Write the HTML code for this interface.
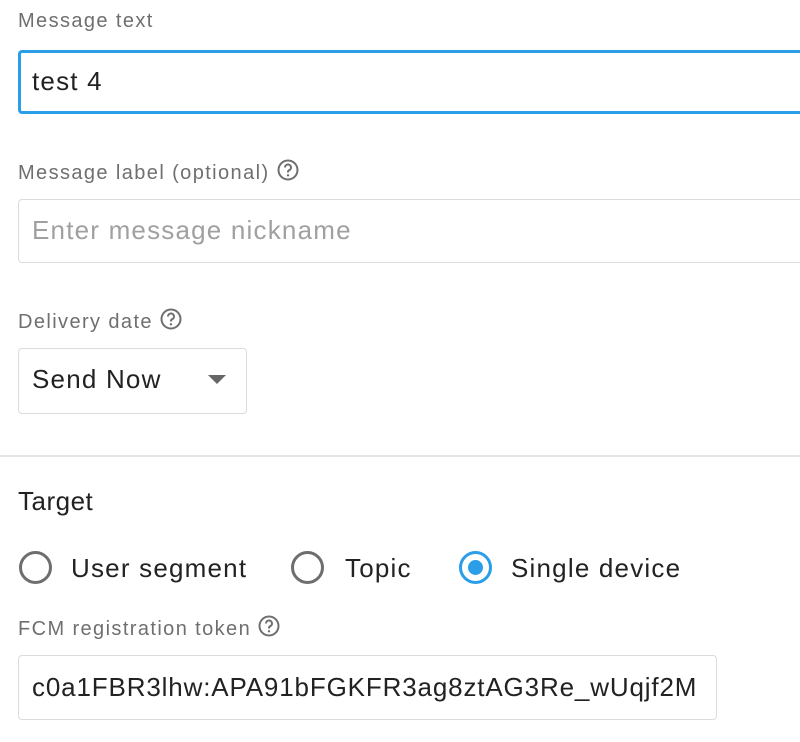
<!DOCTYPE html>
<html><head><meta charset="utf-8"><style>
body{margin:0;width:800px;height:742px;background:#fff;font-family:"Liberation Sans",Arial,sans-serif;position:relative;overflow:hidden}
.a{position:absolute}
.lbl{font-size:20px;color:#6f6f6f;line-height:24px;letter-spacing:1.4px;white-space:nowrap}
.box{position:absolute;box-sizing:border-box;border:1px solid #dcdcdc;border-radius:4px}
.t{position:absolute;font-size:26px;color:#222;line-height:30px;letter-spacing:1.2px;white-space:nowrap}
.q{display:inline-block;vertical-align:-3px;margin-left:6px}
.r{position:absolute;width:33px;height:33px;box-sizing:border-box;border:3px solid #6e6e6e;border-radius:50%}
</style></head><body>
<svg width="0" height="0" style="position:absolute"><symbol id="q" viewBox="0 0 24 24"><circle cx="12" cy="12" r="9.5" fill="none" stroke="#6f6f6f" stroke-width="2"/><path d="M9 9.5a3 3 0 1 1 4.2 2.7c-.8.4-1.2 1-1.2 1.8v.5" fill="none" stroke="#6f6f6f" stroke-width="2"/><circle cx="12" cy="17.3" r="1.2" fill="#6f6f6f"/></symbol></svg>
<div class="a lbl" style="left:18px;top:9px">Message text</div>
<div class="box" style="left:18px;top:50px;width:800px;height:64px;border:3px solid #2a9ee8"></div>
<div class="t" style="left:32px;top:66px">test 4</div>

<div class="a lbl" style="left:18px;top:158px">Message label (optional)<svg class="q" width="24" height="24"><use href="#q"/></svg></div>
<div class="box" style="left:18px;top:199px;width:800px;height:64px"></div>
<div class="t" style="left:32px;top:215px;color:#a0a0a0">Enter message nickname</div>

<div class="a lbl" style="left:18px;top:307px">Delivery date<svg class="q" width="24" height="24"><use href="#q"/></svg></div>
<div class="box" style="left:18px;top:348px;width:229px;height:66px"></div>
<div class="t" style="left:32px;top:364px">Send Now</div>
<div class="a" style="left:208px;top:375px;width:0;height:0;border-left:9px solid transparent;border-right:9px solid transparent;border-top:9px solid #666"></div>

<div class="a" style="left:0;top:455px;width:800px;height:2px;background:#e4e4e4"></div>

<div class="t" style="left:18px;top:486px;letter-spacing:0.5px">Target</div>

<div class="r" style="left:19px;top:551px"></div>
<div class="t" style="left:71px;top:553px">User segment</div>
<div class="r" style="left:291px;top:551px"></div>
<div class="t" style="left:345px;top:553px">Topic</div>
<div class="r" style="left:459px;top:551px;border-color:#2a9ee8"></div>
<div class="a" style="left:468px;top:560px;width:15px;height:15px;border-radius:50%;background:#2a9ee8"></div>
<div class="t" style="left:511px;top:553px">Single device</div>

<div class="a lbl" style="left:18px;top:614px">FCM registration token<svg class="q" width="24" height="24"><use href="#q"/></svg></div>
<div class="box" style="left:18px;top:655px;width:699px;height:65px"></div>
<div class="t" style="left:32px;top:672px;letter-spacing:0.85px">c0a1FBR3lhw:APA91bFGKFR3ag8ztAG3Re_wUqjf2M</div>
</body></html>
